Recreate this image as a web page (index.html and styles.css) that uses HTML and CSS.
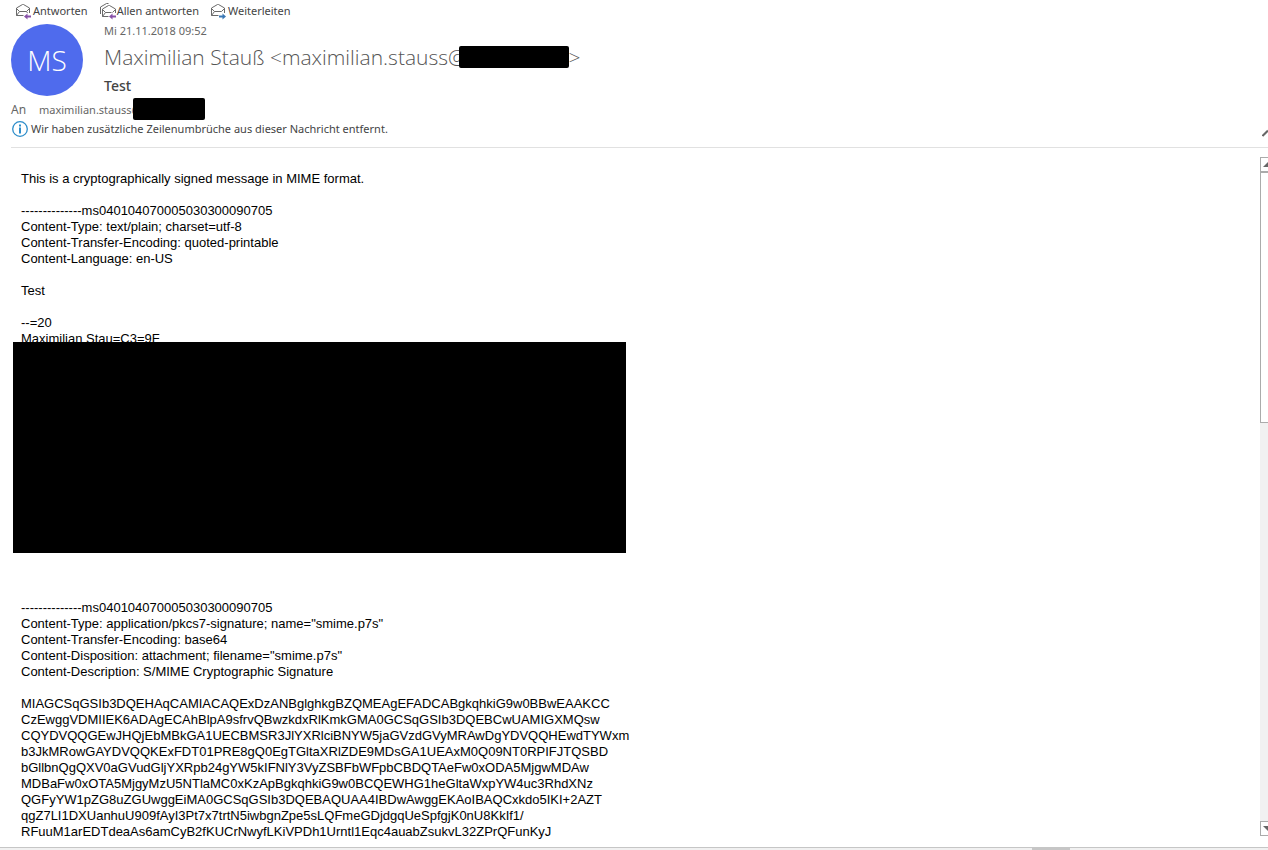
FILE: index.html
```html
<!DOCTYPE html>
<html lang="de">
<head>
<meta charset="utf-8">
<meta name="viewport" content="width=device-width, initial-scale=1">
<title>Test</title>
<link rel="stylesheet" href="styles.css">
</head>
<body>
<div class="window">
  <nav class="actions" aria-label="Nachrichtenaktionen">
    <button class="action" type="button">
      <svg class="action-icon" width="17" height="18" viewBox="0 0 17 18" fill="none" aria-hidden="true">
        <path d="M7.500 13.500H.5V6L6.500 2.500H7.500L13.500 6V11M.5 6.500L3.500 9.500M13.500 6.500L10.500 9.500M.5 13.500L3.500 9.500H10.500L11.500 11" stroke="#6a6a6a"/>
        <path d="M15 14.500H10" stroke="#8751a8" stroke-width="2"/>
        <path d="M8 14.500L11.500 11.500V17.500z" fill="#8751a8"/>
      </svg>Antworten</button>
    <button class="action" type="button">
      <svg class="action-icon" width="17" height="18" viewBox="0 0 17 18" fill="none" aria-hidden="true">
        <path d="M.5 12V5L6.500 1.500H8.500M8.500 14.500H2.500V7L8.500 3.500H9.500L15.500 7V11M2.500 7.500L5.500 10.500M15.500 7.500L12.500 10.500M2.500 14.500L5.500 10.500H11.500" stroke="#6a6a6a"/>
        <path d="M16 14.500H11" stroke="#8751a8" stroke-width="2"/>
        <path d="M9 14.500L12.500 11.500V17.500z" fill="#8751a8"/>
      </svg>Allen antworten</button>
    <button class="action" type="button">
      <svg class="action-icon" width="17" height="18" viewBox="0 0 17 18" fill="none" aria-hidden="true">
        <path d="M7.500 13.500H.5V6L6.500 2.500H7.500L13.500 6V11M.5 6.500L3.500 9.500M13.500 6.500L10.500 9.500M.5 13.500L3.500 9.500H10.500" stroke="#6a6a6a"/>
        <path d="M8 14.500H13" stroke="#3b78b5" stroke-width="2"/>
        <path d="M15 14.500L11.500 11.500V17.500z" fill="#3b78b5"/>
      </svg>Weiterleiten</button>
  </nav>

  <header class="header">
    <div class="identity">
      <div class="avatar">MS</div>
      <div class="summary">
        <time class="date" datetime="2018-11-21T09:52">Mi 21.11.2018 09:52</time>
        <div class="sender">Maximilian Stauß &lt;maximilian.stauss@<span class="redacted redacted-sender"></span>&gt;</div>
        <h1 class="subject">Test</h1>
      </div>
    </div>
    <div class="recipient">
      <span class="recipient-label">An</span>
      <span class="recipient-address">maximilian.stauss@</span><span class="redacted redacted-recipient"></span>
    </div>
    <div class="notice">
      <svg width="16" height="16" viewBox="0 0 16 16" aria-hidden="true">
        <circle cx="8" cy="8" r="7.300" fill="#fff" stroke="#2d8dca" stroke-width="1.300"/>
        <path d="M7 3.500h2v2H7zM7 6.500h2v6H7z" fill="#2d8dca"/>
      </svg>
      <span class="notice-text">Wir haben zusätzliche Zeilenumbrüche aus dieser Nachricht entfernt.</span>
      <button class="collapse" type="button" aria-label="Kopfzeile reduzieren">
        <svg width="6" height="8" viewBox="0 0 6 8" aria-hidden="true"><path d="M.5 7L6 1.500" stroke="#666" stroke-width="2"/></svg>
      </button>
    </div>
  </header>

  <div class="content">
    <main class="message">
      <p class="block">This is a cryptographically signed message in MIME format.</p>
      <p class="block">--------------ms040104070005030300090705
Content-Type: text/plain; charset=utf-8
Content-Transfer-Encoding: quoted-printable
Content-Language: en-US</p>
      <p class="block">Test</p>
      <p class="block">--=20
Maximilian Stau=C3=9F</p>
      <div class="redacted-block"></div>
      <p class="block">--------------ms040104070005030300090705
Content-Type: application/pkcs7-signature; name="smime.p7s"
Content-Transfer-Encoding: base64
Content-Disposition: attachment; filename="smime.p7s"
Content-Description: S/MIME Cryptographic Signature</p>
      <p class="block">MIAGCSqGSIb3DQEHAqCAMIACAQExDzANBglghkgBZQMEAgEFADCABgkqhkiG9w0BBwEAAKCC
CzEwggVDMIIEK6ADAgECAhBlpA9sfrvQBwzkdxRlKmkGMA0GCSqGSIb3DQEBCwUAMIGXMQsw
CQYDVQQGEwJHQjEbMBkGA1UECBMSR3JlYXRlciBNYW5jaGVzdGVyMRAwDgYDVQQHEwdTYWxm
b3JkMRowGAYDVQQKExFDT01PRE8gQ0EgTGltaXRlZDE9MDsGA1UEAxM0Q09NT0RPIFJTQSBD
bGllbnQgQXV0aGVudGljYXRpb24gYW5kIFNlY3VyZSBFbWFpbCBDQTAeFw0xODA5MjgwMDAw
MDBaFw0xOTA5MjgyMzU5NTlaMC0xKzApBgkqhkiG9w0BCQEWHG1heGltaWxpYW4uc3RhdXNz
QGFyYW1pZG8uZGUwggEiMA0GCSqGSIb3DQEBAQUAA4IBDwAwggEKAoIBAQCxkdo5IKI+2AZT
qgZ7LI1DXUanhuU909fAyI3Pt7x7trtN5iwbgnZpe5sLQFmeGDjdgqUeSpfgjK0nU8KkIf1/
RFuuM1arEDTdeaAs6amCyB2fKUCrNwyfLKiVPDh1Urntl1Eqc4auabZsukvL32ZPrQFunKyJ</p>
    </main>
    <div class="scrollbar">
      <button class="scroll-button" type="button" aria-label="Nach oben">
        <svg width="5" height="5" viewBox="0 0 5 5" aria-hidden="true"><path d="M0 5L5 0V5z" fill="#666"/></svg>
      </button>
      <div class="scroll-track"><div class="scroll-thumb"></div></div>
      <button class="scroll-button" type="button" aria-label="Nach unten">
        <svg width="5" height="5" viewBox="0 0 5 5" aria-hidden="true"><path d="M0 0H5V5z" fill="#666"/></svg>
      </button>
    </div>
  </div>
  <footer class="splitter"><div class="splitter-grip"></div></footer>
</div>
</body>
</html>
```
FILE: styles.css
```css
* {
  box-sizing: border-box;
}

body {
  margin: 0;
  background: #fff;
  color: #444;
  font-family: "Noto Sans", "Open Sans", sans-serif;
  font-size: 11px;
}

button {
  display: flex;
  align-items: center;
  padding: 0;
  border: 0;
  background: none;
  color: inherit;
  font: inherit;
}

.window {
  display: flex;
  flex-direction: column;
  height: 100vh;
  overflow: hidden;
}

.actions {
  display: flex;
  gap: 12px;
  padding: 1px 16px 0;
  color: #444;
  line-height: 19px;
}

.action {
  white-space: nowrap;
}

.header {
  margin-left: 11px;
  padding-top: 2px;
  border-bottom: 1px solid #e1e1e1;
}

.identity {
  display: flex;
  gap: 21px;
  padding-top: 2px;
}

.avatar {
  display: flex;
  align-items: center;
  justify-content: center;
  width: 72px;
  height: 72px;
  border-radius: 50%;
  background: #4f6bed;
  color: #fff;
  font-family: "Open Sans", sans-serif;
  font-size: 28px;
  font-weight: 300;
}

.date {
  display: block;
  color: #666;
  line-height: 14px;
}

.sender {
  display: flex;
  align-items: center;
  height: 38px;
  color: #555;
  font-family: "Open Sans", sans-serif;
  font-size: 21px;
  font-weight: 300;
  white-space: nowrap;
}

.subject {
  margin: 0;
  font-size: 14px;
  font-weight: 500;
  line-height: 20px;
}

.redacted {
  border-radius: 2px;
  background: #000;
}

.redacted-sender {
  width: 110px;
  height: 22px;
  margin-left: -8px;
}

.recipient {
  display: flex;
  align-items: center;
  height: 22px;
  margin-top: 2px;
  color: #666;
}

.recipient-label {
  width: 28px;
  font-size: 12px;
}

.redacted-recipient {
  width: 72px;
  height: 22px;
  margin-left: -8px;
}

.notice {
  display: flex;
  align-items: center;
  gap: 3px;
  height: 27px;
  padding: 0 0 10px 1px;
}

.notice-text {
  flex: 1;
}

.collapse {
  align-self: flex-end;
}

.content {
  display: flex;
  flex: 1;
  min-height: 0;
}

.message {
  flex: 1;
  min-width: 0;
  padding: 23px 21px 0;
  overflow: hidden;
  color: #000;
  font: 13px/16px "Liberation Sans", Arial, sans-serif;
}

.block {
  margin: 0 0 16px;
  white-space: pre-wrap;
}

.redacted-block {
  position: relative;
  max-width: 613px;
  height: 211px;
  margin: -21px 0 47px -8px;
  background: #000;
}

.scrollbar {
  display: flex;
  flex-direction: column;
  width: 8px;
  margin: 9px 0 11px;
  background: #f1f1f1;
}

.scroll-button {
  justify-content: flex-end;
  width: 8px;
  height: 15px;
  border: 1px solid #ababab;
  border-right: 0;
  background: #fff;
}

.scroll-track {
  flex: 1;
}

.scroll-thumb {
  height: 38.6%;
  border: 1px solid #ababab;
  border-right: 0;
  background: #fff;
}

.splitter {
  height: 3px;
  border-top: 1px solid #c6c6c6;
  background: #f1f1f1;
}

.splitter-grip {
  width: 3%;
  height: 2px;
  margin-left: 81.4%;
  background: #c6c6c6;
}
```
